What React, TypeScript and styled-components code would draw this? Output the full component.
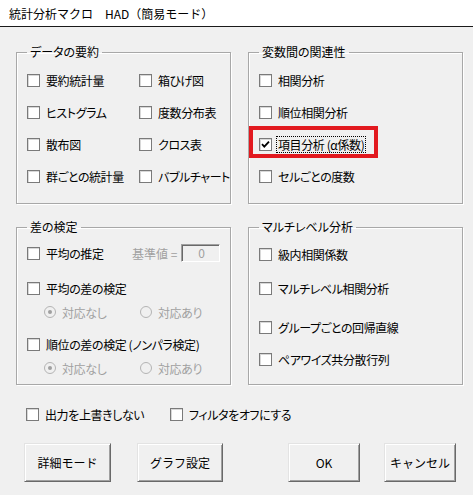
import styled, { createGlobalStyle } from "styled-components";

const GlobalStyle = createGlobalStyle`
  html, body {
    margin: 0;
    padding: 0;
    background: #f0f0f0;
  }
  body {
    font-family: "Noto Sans CJK JP", "Liberation Sans", sans-serif;
    font-size: 12px;
    font-feature-settings: "palt";
    color: #000;
  }
`;

const Window = styled.div`
  width: 473px;
  height: 495px;
  background: #f0f0f0;
  overflow: hidden;
  display: flex;
  flex-direction: column;
`;

const TitleBar = styled.div`
  height: 26px;
  flex: none;
  background: #fff;
  border-bottom: 1px solid #1a1a1a;
  display: flex;
  align-items: center;
  padding-left: 9px;
  font-size: 12px;
  font-feature-settings: normal;
  white-space: pre;
`;

const Body = styled.div`
  padding: 17px 11px 0 16px;
`;

const FrameGrid = styled.div`
  display: grid;
  grid-template-columns: 215px 215px;
  column-gap: 17px;
  row-gap: 15px;
`;

const Frame = styled.fieldset<{ $h: number }>`
  margin: 0;
  padding: 0 10px;
  min-width: 0;
  box-sizing: border-box;
  height: ${(p) => p.$h}px;
  border: 1px solid #a8a8a8;
  box-shadow: inset 1px 1px 0 #fff, 1px 1px 0 #fff;
`;

const Legend = styled.legend`
  padding: 0 3px;
  font-size: 12px;
  line-height: 16px;
`;

const TwoColList = styled.div`
  display: grid;
  grid-template-columns: 112px 1fr;
  grid-auto-rows: 20px;
  row-gap: 12px;
  padding-top: 10px;
`;

const OneColList = styled.div`
  display: grid;
  grid-auto-rows: 20px;
  row-gap: 12px;
  padding-top: 10px;
`;

const Row = styled.div<{ $mt?: number; $indent?: number }>`
  height: 20px;
  display: flex;
  align-items: center;
  position: relative;
  margin-top: ${(p) => p.$mt ?? 0}px;
  padding-left: ${(p) => p.$indent ?? 0}px;
`;

const Item = styled.label<{ $w?: number }>`
  display: flex;
  align-items: center;
  gap: 4px;
  height: 20px;
  white-space: nowrap;
  width: ${(p) => (p.$w ? `${p.$w}px` : "auto")};
  flex: none;
`;

const Box = styled.span`
  width: 13px;
  height: 13px;
  box-sizing: border-box;
  border: 1px solid #7a7a7a;
  background: #fff;
  box-shadow: inset 1px 1px 0 #d8d8d8;
  display: flex;
  align-items: center;
  justify-content: center;
  flex: none;
`;

const Caption = styled.span<{ $focus?: boolean; $dim?: boolean }>`
  color: ${(p) => (p.$dim ? "#a0a0a0" : "#000")};
  line-height: 15px;
  letter-spacing: -0.4px;
  padding: 0 1px;
  border: 1px dotted ${(p) => (p.$focus ? "#000" : "transparent")};
`;

const Highlight = styled.span`
  position: absolute;
  left: -10px;
  top: -8px;
  width: 129px;
  height: 32px;
  box-sizing: border-box;
  border: 4px solid #e2191f;
  pointer-events: none;
`;

const Radio = styled.span<{ $on?: boolean }>`
  width: 12px;
  height: 12px;
  box-sizing: border-box;
  border-radius: 50%;
  border: 1px solid #b4b4b4;
  background: #f0f0f0;
  display: flex;
  align-items: center;
  justify-content: center;
  flex: none;

  &::after {
    content: "";
    width: 4px;
    height: 4px;
    border-radius: 50%;
    background: ${(p) => (p.$on ? "#a0a0a0" : "transparent")};
  }
`;

const DimText = styled.span`
  color: #a0a0a0;
  white-space: nowrap;
`;

const ValueInput = styled.span`
  width: 43px;
  height: 18px;
  box-sizing: border-box;
  border: 1px solid;
  border-color: #a0a0a0 #fff #fff #a0a0a0;
  box-shadow: inset 1px 1px 0 #696969;
  color: #a0a0a0;
  padding-left: 16px;
  line-height: 16px;
  margin-left: 4px;
`;

const OptionsRow = styled.div`
  display: flex;
  align-items: center;
  height: 20px;
  margin-top: 19px;
  padding-left: 10px;
`;

const ButtonRow = styled.div`
  display: flex;
  margin-top: 19px;
  padding-left: 8px;
`;

const Button = styled.button<{ $w: number; $ml: number }>`
  width: ${(p) => p.$w}px;
  height: 39px;
  margin-left: ${(p) => p.$ml}px;
  padding: 0;
  font-family: inherit;
  font-size: 12px;
  color: #000;
  background: #f0f0f0;
  border: 1px solid;
  border-color: #e3e3e3 #696969 #696969 #e3e3e3;
  box-shadow: inset 1px 1px 0 #fff, inset -1px -1px 0 #a0a0a0;
`;

function Check({
  label,
  checked,
  focus,
  w,
}: {
  label: string;
  checked?: boolean;
  focus?: boolean;
  w?: number;
}) {
  return (
    <Item $w={w}>
      <Box>
        {checked && (
          <svg width="9" height="9" viewBox="0 0 9 9">
            <path d="M1 4.2 L3.3 6.6 L8 1.6" stroke="#000" strokeWidth="1.8" fill="none" />
          </svg>
        )}
      </Box>
      <Caption $focus={focus}>{label}</Caption>
    </Item>
  );
}

function Choice({ label, on, w }: { label: string; on?: boolean; w?: number }) {
  return (
    <Item $w={w}>
      <Radio $on={on} />
      <Caption $dim>{label}</Caption>
    </Item>
  );
}

export default function App() {
  return (
    <>
      <GlobalStyle />
      <Window>
        <TitleBar>統計分析マクロ　HAD（簡易モード）</TitleBar>
        <Body>
          <FrameGrid>
            <Frame $h={160}>
              <Legend>データの要約</Legend>
              <TwoColList>
                <Check label="要約統計量" />
                <Check label="箱ひげ図" />
                <Check label="ヒストグラム" />
                <Check label="度数分布表" />
                <Check label="散布図" />
                <Check label="クロス表" />
                <Check label="群ごとの統計量" />
                <Check label="バブルチャート" />
              </TwoColList>
            </Frame>
            <Frame $h={160}>
              <Legend>変数間の関連性</Legend>
              <OneColList>
                <Row>
                  <Check label="相関分析" />
                </Row>
                <Row>
                  <Check label="順位相関分析" />
                </Row>
                <Row>
                  <Check label="項目分析 (α係数)" checked focus />
                  <Highlight />
                </Row>
                <Row>
                  <Check label="セルごとの度数" />
                </Row>
              </OneColList>
            </Frame>
            <Frame $h={166}>
              <Legend>差の検定</Legend>
              <Row $mt={8}>
                <Check label="平均の推定" w={105} />
                <DimText>基準値 =</DimText>
                <ValueInput>0</ValueInput>
              </Row>
              <Row $mt={15}>
                <Check label="平均の差の検定" />
              </Row>
              <Row $mt={4} $indent={17}>
                <Choice label="対応なし" on w={96} />
                <Choice label="対応あり" />
              </Row>
              <Row $mt={12}>
                <Check label="順位の差の検定 (ノンパラ検定)" />
              </Row>
              <Row $mt={4} $indent={17}>
                <Choice label="対応なし" on w={96} />
                <Choice label="対応あり" />
              </Row>
            </Frame>
            <Frame $h={166}>
              <Legend>マルチレベル分析</Legend>
              <Row $mt={9}>
                <Check label="級内相関係数" />
              </Row>
              <Row $mt={14}>
                <Check label="マルチレベル相関分析" />
              </Row>
              <Row $mt={19}>
                <Check label="グループごとの回帰直線" />
              </Row>
              <Row $mt={12}>
                <Check label="ペアワイズ共分散行列" />
              </Row>
            </Frame>
          </FrameGrid>
          <OptionsRow>
            <Check label="出力を上書きしない" w={144} />
            <Check label="フィルタをオフにする" />
          </OptionsRow>
          <ButtonRow>
            <Button $w={87} $ml={0}>詳細モード</Button>
            <Button $w={86} $ml={26}>グラフ設定</Button>
            <Button $w={72} $ml={65}>OK</Button>
            <Button $w={72} $ml={24}>キャンセル</Button>
          </ButtonRow>
        </Body>
      </Window>
    </>
  );
}
